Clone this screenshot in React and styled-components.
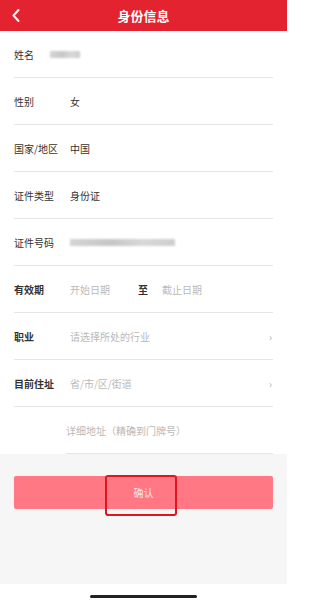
import styled, { createGlobalStyle } from "styled-components";

const GlobalStyle = createGlobalStyle`
  html, body {
    margin: 0;
    padding: 0;
    background: #ffffff;
  }
  * {
    box-sizing: border-box;
  }
`;

const Page = styled.div`
  width: 287px;
  height: 600px;
  display: flex;
  flex-direction: column;
  font-family: "Noto Sans CJK SC", "Noto Sans", sans-serif;
  background: #f6f6f6;
  overflow: hidden;
`;

const Header = styled.div`
  height: 31px;
  display: flex;
  align-items: center;
  justify-content: center;
  position: relative;
  background: #e3232f;
  color: #ffffff;
  font-size: 13px;
  font-weight: bold;
  flex-shrink: 0;
`;

const Back = styled.span`
  position: absolute;
  left: 10px;
  top: 8px;
  display: flex;
`;

const List = styled.div`
  background: #ffffff;
  display: flex;
  flex-direction: column;
  padding: 0 14px;
`;

const Row = styled.div`
  height: 47px;
  display: flex;
  align-items: center;
  border-bottom: 1px solid #e6e6e6;
  margin-left: ${(p) => (p.$indent ? "52px" : "0")};
`;

const Label = styled.span`
  width: 56px;
  font-size: 10px;
  color: #333333;
  font-weight: ${(p) => (p.$bold ? "bold" : "normal")};
  flex-shrink: 0;
`;

const Value = styled.span`
  flex: 1;
  font-size: 10px;
  color: ${(p) => (p.$placeholder ? "#b9b9b9" : "#333333")};
  display: flex;
  align-items: center;
`;

const Blur = styled.span`
  display: inline-block;
  width: ${(p) => p.$w}px;
  height: 7px;
  background: linear-gradient(90deg, #d4d4d4, #c6c6c6 40%, #d8d8d8 70%, #cdcdcd);
  filter: blur(1px);
  margin-left: ${(p) => p.$ml || 0}px;
`;

const To = styled.span`
  font-size: 10px;
  color: #333333;
  font-weight: bold;
  margin: 0 14px 0 28px;
`;

const Chevron = styled.span`
  font-size: 10px;
  color: #b0b0b0;
  padding-right: 1px;
`;

const Footer = styled.div`
  flex: 1;
  display: flex;
  flex-direction: column;
  padding: 22px 14px 0;
`;

const ButtonWrap = styled.div`
  position: relative;
`;

const Confirm = styled.button`
  width: 100%;
  height: 33px;
  border: none;
  border-radius: 2px;
  background: #ff7883;
  color: #fbe3e5;
  font-size: 10px;
  font-family: inherit;
`;

const Highlight = styled.div`
  position: absolute;
  left: 91px;
  top: -1px;
  width: 72px;
  height: 41px;
  border: 2px solid #e0161f;
  border-radius: 3px;
  pointer-events: none;
`;

const Bottom = styled.div`
  margin-top: auto;
  height: 16px;
  background: #ffffff;
  display: flex;
  justify-content: center;
  align-items: flex-end;
  padding-bottom: 2px;
`;

const HomeBar = styled.div`
  width: 107px;
  height: 3px;
  border-radius: 2px;
  background: #222222;
`;

const App = () => {
  return (
    <>
      <GlobalStyle />
      <Page>
        <Header>
          <Back>
            <svg width="12" height="15" viewBox="0 0 12 15">
              <path d="M8.5 2 L3.5 7.5 L8.5 13" fill="none" stroke="#ffffff" strokeWidth="2" strokeLinecap="round" strokeLinejoin="round" />
            </svg>
          </Back>
          身份信息
        </Header>
        <List>
          <Row>
            <Label>姓名</Label>
            <Value>
              <Blur $w={30} $ml={-20} />
            </Value>
          </Row>
          <Row>
            <Label>性别</Label>
            <Value>女</Value>
          </Row>
          <Row>
            <Label>国家/地区</Label>
            <Value>中国</Value>
          </Row>
          <Row>
            <Label>证件类型</Label>
            <Value>身份证</Value>
          </Row>
          <Row>
            <Label>证件号码</Label>
            <Value>
              <Blur $w={105} />
            </Value>
          </Row>
          <Row>
            <Label $bold>有效期</Label>
            <Value $placeholder>
              开始日期
              <To>至</To>
              截止日期
            </Value>
          </Row>
          <Row>
            <Label $bold>职业</Label>
            <Value $placeholder>请选择所处的行业</Value>
            <Chevron>›</Chevron>
          </Row>
          <Row>
            <Label $bold>目前住址</Label>
            <Value $placeholder>省/市/区/街道</Value>
            <Chevron>›</Chevron>
          </Row>
          <Row $indent>
            <Value $placeholder>详细地址（精确到门牌号）</Value>
          </Row>
        </List>
        <Footer>
          <ButtonWrap>
            <Confirm>确认</Confirm>
            <Highlight />
          </ButtonWrap>
        </Footer>
        <Bottom>
          <HomeBar />
        </Bottom>
      </Page>
    </>
  );
};

export default App;
